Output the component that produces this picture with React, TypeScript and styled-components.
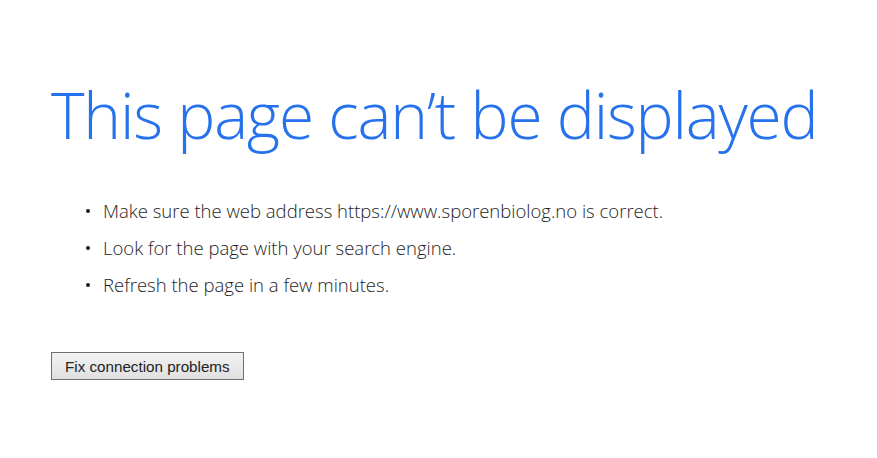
import React from "react";
import styled, { createGlobalStyle } from "styled-components";

const GlobalStyle = createGlobalStyle`
  html, body { margin: 0; padding: 0; background: #ffffff; }
  body { font-family: "Open Sans", "Noto Sans", sans-serif; }
`;

const Page = styled.main`
  display: flex;
  flex-direction: column;
  align-items: flex-start;
  padding: 71px 0 0 51px;
`;

const Title = styled.h1`
  margin: 0;
  font-family: "Open Sans", "Noto Sans", sans-serif;
  font-weight: 300;
  font-size: 64px;
  line-height: 88px;
  color: #2672ec;
  letter-spacing: -1.2px;
  white-space: nowrap;
`;

const List = styled.ul`
  margin: 40px 0 0 0;
  padding: 0 0 0 35px;
  list-style: none;
  display: flex;
  flex-direction: column;
  gap: 13px;
`;

const Item = styled.li`
  display: flex;
  align-items: center;
  gap: 13px;
  font-family: "Open Sans", "Noto Sans", sans-serif;
  font-weight: 300;
  font-size: 18.5px;
  line-height: 24px;
  color: #1e1e1e;
  &::before {
    content: "";
    width: 4px;
    height: 4px;
    border-radius: 50%;
    background: #1e1e1e;
    flex: none;
  }
`;

const FixButton = styled.button`
  margin: 55px 0 0 0;
  height: 28px;
  padding: 0 13px;
  font-family: "Liberation Sans", Arial, sans-serif;
  font-size: 15.2px;
  color: #222222;
  background: linear-gradient(#f2f2f2, #e0e0e0);
  border: 1px solid #707070;
  border-radius: 0;
  cursor: pointer;
`;

export default function App() {
  return (
    <>
      <GlobalStyle />
      <Page>
        <Title>This page can’t be displayed</Title>
        <List>
          <Item>Make sure the web address https://www.sporenbiolog.no is correct.</Item>
          <Item>Look for the page with your search engine.</Item>
          <Item>Refresh the page in a few minutes.</Item>
        </List>
        <FixButton>Fix connection problems</FixButton>
      </Page>
    </>
  );
}
